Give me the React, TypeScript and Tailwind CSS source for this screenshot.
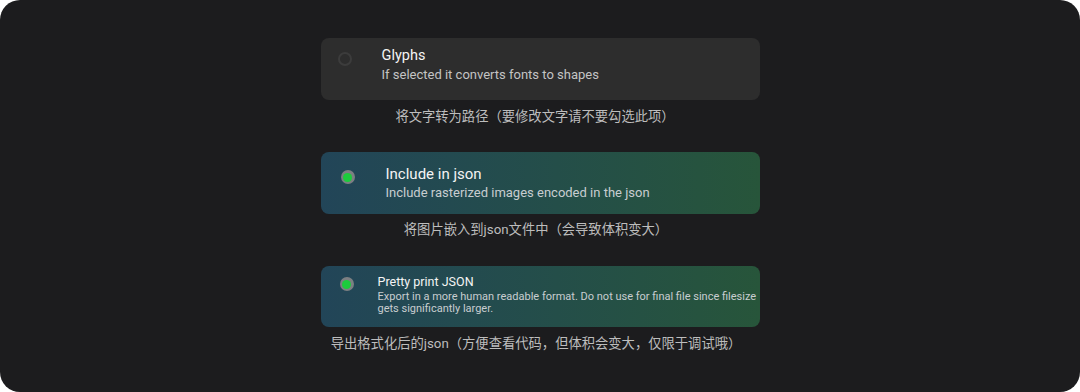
const font = { fontFamily: "Roboto, 'Noto Sans CJK SC', sans-serif" };

function Radio({ on }: { on?: boolean }) {
  return on ? (
    <span className="flex h-[14px] w-[14px] shrink-0 items-center justify-center rounded-full bg-[#7c7f82]">
      <span className="h-[9px] w-[9px] rounded-full bg-[#1ccc3c]" />
    </span>
  ) : (
    <span className="h-[14px] w-[14px] shrink-0 rounded-full border-2 border-[#3c3c3c]" />
  );
}

export default function App() {
  return (
    <div className="bg-white" style={font}>
      <div className="flex h-[392px] w-[1080px] flex-col items-center rounded-[20px] bg-[#1c1c1e] pt-[38px]">
        {/* Glyphs */}
        <div className="flex h-[62px] w-[439px] items-start rounded-lg bg-[#2d2d2d] pt-[9px]">
          <div className="ml-[17px] mt-[5px] flex w-[44px] shrink-0">
            <Radio />
          </div>
          <div className="flex flex-col">
            <span className="text-[14.5px] leading-[18px] text-[#f4f4f4]">Glyphs</span>
            <span className="mt-[2px] text-[13px] leading-[16px] text-[#c4c4c4]">
              If selected it converts fonts to shapes
            </span>
          </div>
        </div>
        <p className="mt-[9px] mr-[10px] text-[13.3px] leading-[16px] text-[#bdbdbd]">
          将文字转为路径（要修改文字请不要勾选此项）
        </p>

        {/* Include in json */}
        <div className="mt-[27px] flex h-[62px] w-[439px] items-start rounded-lg bg-gradient-to-r from-[#224558] to-[#27553a] pt-[13px]">
          <div className="ml-[20px] mt-[5px] flex w-[45px] shrink-0">
            <Radio on />
          </div>
          <div className="flex flex-col">
            <span className="text-[15px] leading-[18px] text-[#f4f4f4]">Include in json</span>
            <span className="mt-[2px] text-[13px] leading-[16px] text-[#c8cdd0]">
              Include rasterized images encoded in the json
            </span>
          </div>
        </div>
        <p className="mt-[8px] mr-[8px] text-[13.3px] leading-[16px] text-[#bdbdbd]">
          将图片嵌入到json文件中（会导致体积变大）
        </p>

        {/* Pretty print JSON */}
        <div className="mt-[28px] flex h-[61px] w-[439px] items-start rounded-lg bg-gradient-to-r from-[#224558] to-[#27553a] pt-[8px]">
          <div className="ml-[19px] mt-[3px] flex w-[38px] shrink-0">
            <Radio on />
          </div>
          <div className="flex flex-col pr-[3px]">
            <span className="text-[12.5px] leading-[15px] text-[#f4f4f4]">Pretty print JSON</span>
            <span className="mt-[2px] text-[11px] leading-[12px] text-[#c8cdd0]">
              Export in a more human readable format. Do not use for final file since filesize gets significantly larger.
            </span>
          </div>
        </div>
        <p className="mt-[9px] mr-[8px] text-[13.3px] leading-[16px] text-[#bdbdbd]">
          导出格式化后的json（方便查看代码，但体积会变大，仅限于调试哦）
        </p>
      </div>
    </div>
  );
}
